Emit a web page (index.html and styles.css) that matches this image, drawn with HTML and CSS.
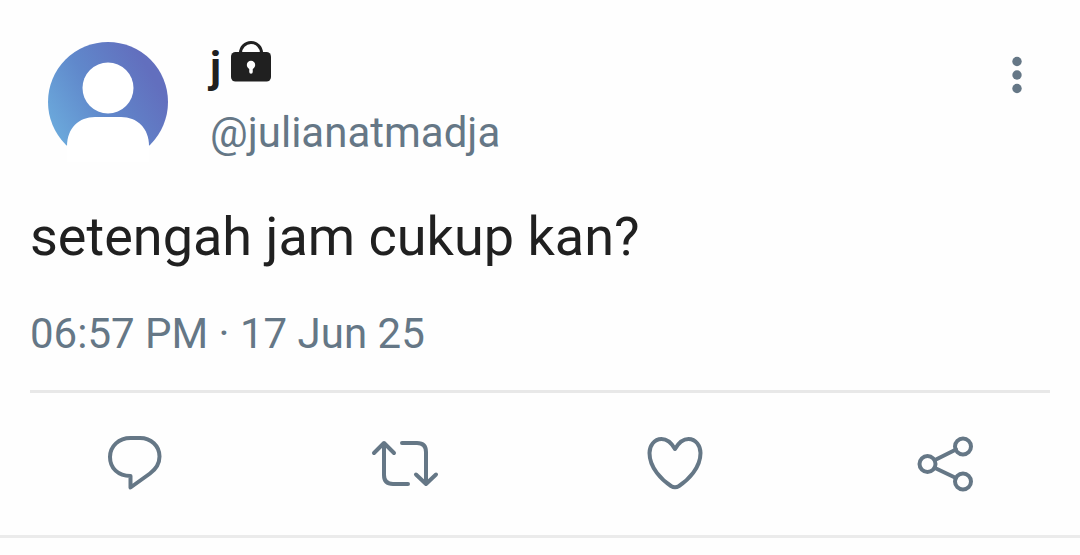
FILE: index.html
```html
<!DOCTYPE html>
<html lang="id">
<head>
<meta charset="utf-8">
<meta name="viewport" content="width=device-width, initial-scale=1">
<title>Post</title>
<link rel="stylesheet" href="styles.css">
</head>
<body>
<article class="post">
  <header class="post-header">
    <svg class="avatar" viewBox="0 0 120 120" role="img" aria-label="Avatar">
      <defs>
        <linearGradient id="sky" x1="0" y1="0.75" x2="0.85" y2="0.25">
          <stop offset="0" stop-color="#6cacdd"/>
          <stop offset="0.5" stop-color="#6088cb"/>
          <stop offset="1" stop-color="#626fbe"/>
        </linearGradient>
      </defs>
      <circle cx="60" cy="60" r="60" fill="url(#sky)"/>
      <circle cx="60" cy="46" r="25.500" fill="#fff"/>
      <path d="M19 121V104C19 86 31 75 47 75H73C89 75 101 86 101 104V121Z" fill="#fff"/>
    </svg>
    <div class="author">
      <div class="name">
        <span>j</span>
        <svg class="lock" viewBox="0 0 40 41" role="img" aria-label="Protected account">
          <path d="M9.500 13V12a10.500 10.500 0 0 1 21 0v1" fill="none" stroke="#202020" stroke-width="3"/>
          <rect y="11" width="40" height="29.500" rx="4.500" fill="#202020"/>
          <circle cx="20" cy="24" r="4.200" fill="#fff"/>
          <path d="M20 25v6" stroke="#fff" stroke-width="3.500" stroke-linecap="round"/>
        </svg>
      </div>
      <a class="handle" href="#">@julianatmadja</a>
    </div>
    <button class="menu" type="button" aria-label="More">
      <svg class="dots" viewBox="0 0 10 38"><circle cx="5" cy="5.500" r="4.700"/><circle cx="5" cy="19" r="4.700"/><circle cx="5" cy="32.500" r="4.700"/></svg>
    </button>
  </header>
  <p class="text">setengah jam cukup kan?</p>
  <time class="date" datetime="2025-06-17T18:57">06:57 PM · 17 Jun 25</time>
  <footer class="actions">
    <button class="action" type="button" aria-label="Reply">
      <svg class="icon" viewBox="0 0 72 72"><path d="M31.500 10H41C52 10 60.500 18 60.500 28.500C60.500 36 57 41 51 45.500L31.500 59.500V48C19 48 11 40 11 29C11 18 20 10 31.500 10Z"/></svg>
    </button>
    <button class="action" type="button" aria-label="Repost">
      <svg class="icon" viewBox="0 0 72 72"><path d="M5 25L15 15L25 25M15 15V47Q15 56 24 56H39M33 15H48Q57 15 57 24V56M47 46.500L57 56L67 46.500"/></svg>
    </button>
    <button class="action" type="button" aria-label="Like">
      <svg class="icon" viewBox="0 0 72 72"><path d="M36 21C32 14 27.500 11 22.500 11C15 11 10.500 18 10.500 25C10.500 40 23 52 32 58Q36 60.500 40 58C49 52 61.500 40 61.500 25C61.500 18 57 11 49.500 11C44.500 11 40 14 36 21Z"/></svg>
    </button>
    <button class="action" type="button" aria-label="Share">
      <svg class="icon" viewBox="0 0 72 72"><circle cx="18.500" cy="36" r="8"/><circle cx="54" cy="18.500" r="8"/><circle cx="54" cy="53.500" r="8"/><path d="M26 32L47 21.500M26 40L47 50"/></svg>
    </button>
  </footer>
</article>
</body>
</html>
```
FILE: styles.css
```css
* {
  box-sizing: border-box;
}

body {
  margin: 0;
  background: #fefefe;
  color: #202020;
  font-family: Roboto, "Liberation Sans", sans-serif;
}

button {
  padding: 0;
  border: 0;
  background: none;
  color: inherit;
  cursor: pointer;
}

svg {
  display: block;
}

.post {
  padding-top: 35px;
  border-bottom: 3px solid #ebebeb;
}

.post-header {
  display: flex;
  align-items: flex-start;
  padding: 0 48px;
}

.avatar {
  width: 120px;
  height: 120px;
  margin-top: 7px;
}

.author {
  flex: 1;
  margin-left: 42px;
  font-size: 42px;
  line-height: 65px;
}

.name {
  display: flex;
  gap: 10px;
  font-weight: 700;
}

.lock {
  width: 40px;
  height: 41px;
  margin-top: 6px;
}

.handle {
  display: block;
  color: #657786;
  text-decoration: none;
}

.menu {
  margin-top: 21px;
  padding: 0 10px;
}

.dots {
  width: 10px;
  height: 38px;
  fill: #657786;
}

.text {
  margin: 40px 30px 0;
  font-size: 54px;
  line-height: 64px;
}

.date {
  display: block;
  margin: 40px 30px 0;
  padding-bottom: 31px;
  border-bottom: 3px solid #e8e8e8;
  color: #657786;
  font-size: 42px;
  line-height: 50px;
}

.actions {
  display: grid;
  grid-template-columns: repeat(4, 1fr);
  padding: 35px 0;
  color: #657786;
}

.action {
  display: flex;
  justify-content: center;
}

.icon {
  width: 72px;
  height: 72px;
  fill: none;
  stroke: currentColor;
  stroke-width: 4;
  stroke-linecap: round;
  stroke-linejoin: round;
}
```
